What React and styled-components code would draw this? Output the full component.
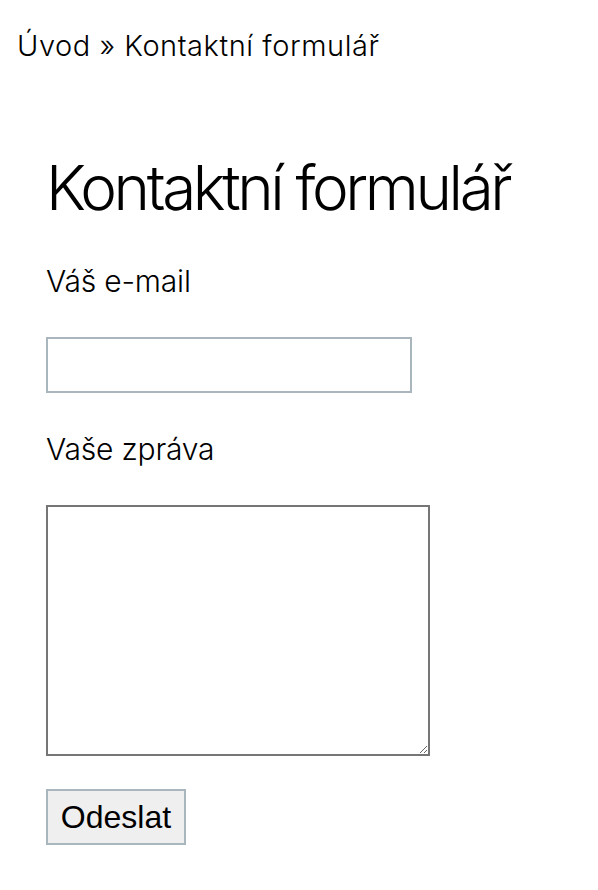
import styled, { createGlobalStyle } from "styled-components";

const Global = createGlobalStyle`
  body {
    margin: 0;
    background: #fff;
    color: #000;
    font-family: Inter, "Noto Sans", sans-serif;
    font-weight: 300;
  }
`;

const Breadcrumb = styled.nav`
  padding: 26px 17px 0;
  font-size: 29px;
  line-height: 40px;
  letter-spacing: 0.55px;
`;

const Main = styled.main`
  padding: 0 46px;
`;

const Heading = styled.h1`
  margin: 86px 0 0;
  font-size: 62px;
  font-weight: 300;
  line-height: 72px;
  letter-spacing: -3.4px;
  white-space: nowrap;
`;

const Form = styled.form`
  display: flex;
  flex-direction: column;
  align-items: flex-start;
`;

const Label = styled.label`
  display: block;
  margin-top: ${(p) => p.$top || 0}px;
  font-size: 30px;
  line-height: 40px;
  letter-spacing: -0.2px;
`;

const Input = styled.input`
  box-sizing: border-box;
  width: 366px;
  height: 56px;
  margin-top: 36px;
  border: 2px solid #a9b6bd;
  border-radius: 0;
  outline: none;
`;

const TextArea = styled.textarea`
  box-sizing: border-box;
  width: 384px;
  height: 251px;
  margin-top: 36px;
  border: 2px solid #767676;
  border-radius: 0;
  outline: none;
`;

const Button = styled.button`
  box-sizing: border-box;
  width: 140px;
  height: 56px;
  margin-top: 33px;
  padding: 0;
  background: #efefef;
  border: 2px solid #a9b6bd;
  border-radius: 0;
  font-family: "Liberation Sans", Arial, sans-serif;
  font-size: 32px;
  color: #000;
`;

export default function App() {
  return (
    <>
      <Global />
      <Breadcrumb>Úvod » Kontaktní formulář</Breadcrumb>
      <Main>
        <Heading>Kontaktní formulář</Heading>
        <Form onSubmit={(e) => e.preventDefault()}>
          <Label $top={37}>Váš e-mail</Label>
          <Input type="email" />
          <Label $top={36}>Vaše zpráva</Label>
          <TextArea />
          <Button type="submit">Odeslat</Button>
        </Form>
      </Main>
    </>
  );
}
